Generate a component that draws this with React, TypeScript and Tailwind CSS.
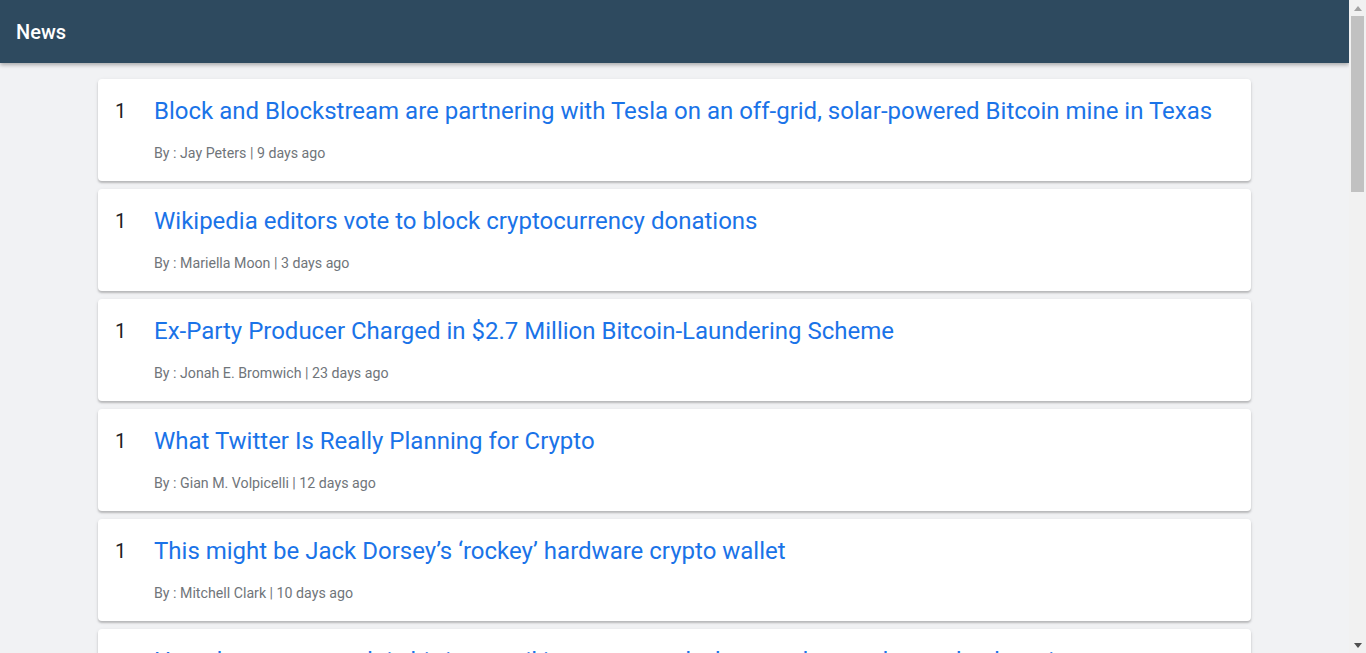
import React from "react";

type Story = { rank: number; title: string; author: string; age: string };

const stories: Story[] = [
  { rank: 1, title: "Block and Blockstream are partnering with Tesla on an off-grid, solar-powered Bitcoin mine in Texas", author: "Jay Peters", age: "9 days ago" },
  { rank: 1, title: "Wikipedia editors vote to block cryptocurrency donations", author: "Mariella Moon", age: "3 days ago" },
  { rank: 1, title: "Ex-Party Producer Charged in $2.7 Million Bitcoin-Laundering Scheme", author: "Jonah E. Bromwich", age: "23 days ago" },
  { rank: 1, title: "What Twitter Is Really Planning for Crypto", author: "Gian M. Volpicelli", age: "12 days ago" },
  { rank: 1, title: "This might be Jack Dorsey’s ‘rockey’ hardware crypto wallet", author: "Mitchell Clark", age: "10 days ago" },
  { rank: 1, title: "How the crypto crash is hitting retail investors, and what regulators plan to do about it", author: "Eric Lipton", age: "5 days ago" },
];

function StoryCard({ story }: { story: Story }) {
  return (
    <div className="flex rounded bg-white px-4 pt-4 pb-[18px] shadow-[0_2px_2px_rgba(0,0,0,0.2),0_1px_4px_rgba(0,0,0,0.08)]">
      <div className="w-10 shrink-0 pl-px text-xl leading-8 text-[#202124]">{story.rank}</div>
      <div className="min-w-0">
        <a href="#" className="block text-2xl leading-8 text-[#1a73e8]">
          {story.title}
        </a>
        <p className="mt-4 text-[14.2px] leading-5 text-[#70757a]">
          By : {story.author} | {story.age}
        </p>
      </div>
    </div>
  );
}

// fake classic scrollbar, the screenshot has one
function Scrollbar() {
  return (
    <div className="flex h-full w-[17px] shrink-0 flex-col bg-[#f1f1f1]">
      <div className="flex h-[16px] items-center justify-center">
        <svg width="8" height="5" viewBox="0 0 8 5"><polygon points="0,5 4,0 8,5" fill="#a3a3a3" /></svg>
      </div>
      <div className="mx-[2px] h-[176px] bg-[#c1c1c1]" />
      <div className="flex-1" />
      <div className="flex h-[16px] items-center justify-center">
        <svg width="8" height="5" viewBox="0 0 8 5"><polygon points="0,0 8,0 4,5" fill="#505050" /></svg>
      </div>
    </div>
  );
}

export default function App() {
  return (
    <div className="flex h-screen overflow-hidden bg-[#f1f2f4] font-['Roboto',sans-serif]">
      <div className="min-w-0 flex-1 overflow-hidden">
        <header className="flex h-[63px] items-center bg-[#2e4a5f] px-4 shadow-[0_2px_4px_rgba(0,0,0,0.3)]">
          <h1 className="text-xl font-medium text-white">News</h1>
        </header>

        <main className="mx-auto w-[1153px] space-y-2 pt-4 pb-8">
          {stories.map((s, i) => (
            <StoryCard key={i} story={s} />
          ))}
        </main>
      </div>
      <Scrollbar />
    </div>
  );
}
